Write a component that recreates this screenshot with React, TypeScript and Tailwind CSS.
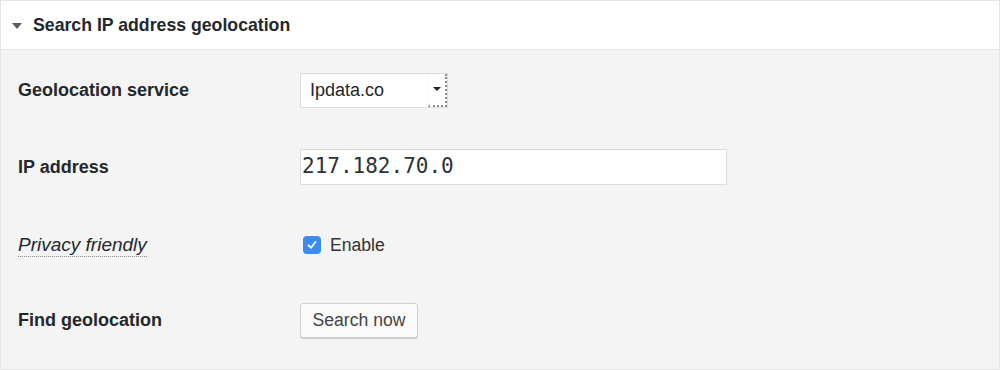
export default function App() {
  return (
    <div className="w-[1000px] h-[370px] bg-[#f4f4f4] text-[#23282d] font-['Liberation_Sans',Arial,sans-serif]">
      <div className="h-full border border-[#e5e5e5] flex flex-col">
        {/* Header */}
        <div className="h-[49px] bg-white border-b border-[#e5e5e5] flex items-center pl-[11px] gap-[11px] shrink-0">
          <svg width="10" height="6" viewBox="0 0 10 6" className="mt-[1px]">
            <path d="M0 0 L10 0 L5 6 Z" fill="#555d66" />
          </svg>
          <h2 className="text-[17.7px] font-bold">Search IP address geolocation</h2>
        </div>

        {/* Form rows */}
        <div className="flex flex-col pl-[17px] pt-[22px]">
          <div className="flex items-center h-[36px]">
            <div className="w-[282px] text-[18px] font-bold">Geolocation service</div>
            <div className="flex w-[148px] h-[35px] bg-white border border-[#dcdcdc]">
              <span className="flex-1 flex items-center pl-[9px] text-[18px]">Ipdata.co</span>
              <span className="w-[19px] flex items-center justify-center border-l border-[#eee] border-r-2 border-b-2 border-r-[#8a8a8a] border-b-[#8a8a8a] border-dotted">
                <svg width="8" height="4" viewBox="0 0 8 4">
                  <path d="M0 0 L8 0 L4 4 Z" fill="#222" />
                </svg>
              </span>
            </div>
          </div>

          <div className="flex items-center h-[36px] mt-[41px]">
            <div className="w-[282px] text-[18px] font-bold">IP address</div>
            <div className="w-[427px] h-[36px] bg-white border border-[#dcdcdc] flex items-center pl-[1px] text-[21px] font-['DejaVu_Sans_Mono',monospace] text-[#2c3338]">
              217.182.70.0
            </div>
          </div>

          <div className="flex items-center h-[36px] mt-[42px]">
            <div className="w-[282px]">
              <span className="text-[19px] italic border-b border-dotted border-[#888] pb-[1px]">Privacy friendly</span>
            </div>
            <div className="flex items-center gap-[9px] pl-[3px]">
              <span className="w-[18px] h-[18px] rounded-[4px] bg-[#3b8bf0] flex items-center justify-center">
                <svg width="12" height="12" viewBox="0 0 12 12">
                  <path d="M2.5 6.3 L5 8.8 L9.5 3" fill="none" stroke="white" strokeWidth="1.8" strokeLinecap="round" strokeLinejoin="round" />
                </svg>
              </span>
              <span className="text-[17.6px] text-[#333]">Enable</span>
            </div>
          </div>

          <div className="flex items-center h-[36px] mt-[39px]">
            <div className="w-[282px] text-[18px] font-bold">Find geolocation</div>
            <button className="h-[35px] w-[118px] bg-[#fafafa] border border-[#d0d0d0] rounded-[3px] shadow-[0_1px_0_#ccc] text-[17.6px] text-[#444]">
              Search now
            </button>
          </div>
        </div>
      </div>
    </div>
  );
}
